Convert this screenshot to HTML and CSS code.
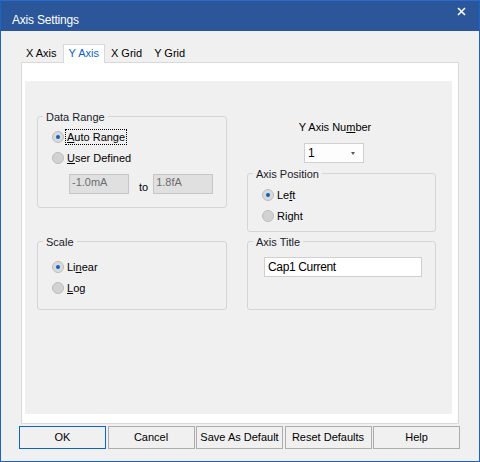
FILE: index.html
```html
<!DOCTYPE html>
<html>
<head>
<meta charset="utf-8">
<title>Axis Settings</title>
<link rel="stylesheet" href="styles.css">
</head>
<body>
<div class="window">
  <div class="titlebar">
    <span class="title">Axis Settings</span>
    <svg class="close" width="9" height="9" viewBox="0 0 9 9"><path d="M1 1 L8 8 M8 1 L1 8" stroke="#fff" stroke-width="1.6" fill="none"/></svg>
  </div>
  <div class="tabs">
    <div class="tab">X Axis</div>
    <div class="tab active">Y Axis</div>
    <div class="tab">X Grid</div>
    <div class="tab">Y Grid</div>
  </div>
  <div class="panel">
    <div class="inner">
      <div class="col col-left">
        <div class="group group-range">
          <span class="legend">Data Range</span>
          <div class="radio-row"><span class="radio checked"></span><span class="label focus"><u>A</u>uto Range</span></div>
          <div class="radio-row"><span class="radio"></span><span class="label"><u>U</u>ser Defined</span></div>
          <div class="range-row">
            <div class="field disabled">-1.0mA</div>
            <span class="to">to</span>
            <div class="field disabled">1.8fA</div>
          </div>
        </div>
        <div class="group group-scale">
          <span class="legend">Scale</span>
          <div class="radio-row"><span class="radio checked"></span><span class="label">Li<u>n</u>ear</span></div>
          <div class="radio-row"><span class="radio"></span><span class="label"><u>L</u>og</span></div>
        </div>
      </div>
      <div class="col col-right">
        <div class="axis-number">
          <div class="axis-label">Y Axis Nu<u>m</u>ber</div>
          <div class="combo"><span class="combo-value">1</span><span class="caret"></span></div>
        </div>
        <div class="group group-position">
          <span class="legend">Axis Position</span>
          <div class="radio-row"><span class="radio checked"></span><span class="label">Le<u>f</u>t</span></div>
          <div class="radio-row"><span class="radio"></span><span class="label">Ri<u>g</u>ht</span></div>
        </div>
        <div class="group group-title">
          <span class="legend">Axis Title</span>
          <div class="field text-field">Cap1 Current</div>
        </div>
      </div>
    </div>
  </div>
  <div class="buttons">
    <div class="btn default">OK</div>
    <div class="btn">Cancel</div>
    <div class="btn">Save As Default</div>
    <div class="btn">Reset Defaults</div>
    <div class="btn">Help</div>
  </div>
</div>
</body>
</html>
```
FILE: styles.css
```css
html, body {
  margin: 0;
  padding: 0;
}
body {
  width: 480px;
  height: 462px;
  background: #f0f0f0;
  font-family: "Liberation Sans", Arial, sans-serif;
  font-size: 11px;
  color: #000;
}
.window {
  box-sizing: border-box;
  width: 480px;
  height: 462px;
  border: 1px solid #1b63c4;
  border-top-color: #2a6bd0;
  display: flex;
  flex-direction: column;
  background: #f0f0f0;
}
.titlebar {
  height: 30px;
  background: #2b579a;
  display: flex;
  justify-content: space-between;
  align-items: flex-start;
  padding: 0 13px 0 11px;
  flex: none;
}
.title {
  color: #fff;
  font-size: 12px;
  line-height: 14px;
  margin-top: 12px;
  letter-spacing: -0.2px;
}
.close {
  margin-top: 6px;
}
.tabs {
  display: flex;
  margin: 13px 0 -1px 19px;
  flex: none;
}
.tab {
  border: 1px solid transparent;
  border-bottom: none;
  line-height: 17px;
  padding: 0 5px 1px;
  color: #000;
}
.tab.active {
  background: #fff;
  border-color: #d9d9d9;
  color: #0a64c8;
  position: relative;
  z-index: 1;
}
.panel {
  box-sizing: border-box;
  height: 362px;
  margin: 0 20px;
  border: 1px solid #d9d9d9;
  background: #fff;
  padding: 18px 6px 9px 3px;
  flex: none;
}
.inner {
  height: 100%;
  background: #f0f0f0;
  display: grid;
  grid-template-columns: 190px 189px;
  column-gap: 20px;
  padding-left: 12px;
  align-items: start;
}
.col {
  display: flex;
  flex-direction: column;
}
.col-left {
  margin-top: 35px;
}
.col-right {
  margin-top: 39px;
}
.group {
  box-sizing: border-box;
  position: relative;
  border: 1px solid #d5d5d5;
  border-radius: 3px;
  padding-left: 14px;
}
.legend {
  position: absolute;
  top: -7px;
  left: 5px;
  padding: 0 3px;
  background: #f0f0f0;
  line-height: 14px;
  color: #1a1a2a;
}
.group-range {
  height: 92px;
  padding-top: 9px;
}
.group-scale {
  height: 69px;
  margin-top: 33px;
  padding-top: 14px;
}
.group-position {
  height: 59px;
  margin-top: 10px;
  padding-top: 10px;
}
.group-title {
  height: 69px;
  margin-top: 9px;
  padding: 15px 0 0 16px;
}
.radio-row {
  height: 21px;
  display: flex;
  align-items: center;
}
.radio {
  box-sizing: border-box;
  width: 12px;
  height: 12px;
  border-radius: 50%;
  border: 1px solid #bdbdbd;
  background: #d2d2d2;
  display: flex;
  align-items: center;
  justify-content: center;
  flex: none;
}
.radio.checked {
  background: #dadada;
}
.radio.checked::after {
  content: "";
  width: 4px;
  height: 4px;
  border-radius: 50%;
  background: #0563c8;
}
.label {
  margin-left: 1px;
  padding: 0 1px;
  border: 1px solid transparent;
  line-height: 14px;
}
.label.focus {
  border: 1px dotted #000;
}
.range-row {
  display: flex;
  margin: 6px 0 0 17px;
}
.field {
  box-sizing: border-box;
  height: 20px;
  border: 1px solid #cfcfcf;
  background: #fff;
}
.field.disabled {
  width: 60px;
  background: #e0e0e0;
  border-color: #c6c6c6;
  color: #6d6d6d;
  line-height: 14px;
  padding-left: 2px;
}
.to {
  align-self: flex-end;
  line-height: 14px;
  margin: 0 5px 0 10px;
}
.axis-number {
  width: 176px;
  display: flex;
  flex-direction: column;
}
.axis-label {
  line-height: 14px;
  text-align: center;
}
.combo {
  box-sizing: border-box;
  width: 60px;
  height: 20px;
  margin: 9px 0 0 57px;
  border: 1px solid #d0d0d0;
  background: #fdfdfd;
  display: flex;
  align-items: center;
  justify-content: space-between;
  padding: 0 8px 0 3px;
}
.combo-value {
  font-size: 12px;
  line-height: 18px;
}
.caret {
  width: 0;
  height: 0;
  border-left: 2.5px solid transparent;
  border-right: 2.5px solid transparent;
  border-top: 3px solid #5a5a5a;
}
.text-field {
  width: 158px;
  font-size: 12px;
  line-height: 18px;
  padding-left: 3px;
  letter-spacing: -0.35px;
}
.buttons {
  display: flex;
  gap: 1.5px;
  margin: 2px 0 0 18px;
  flex: none;
}
.btn {
  box-sizing: border-box;
  width: 87px;
  height: 23px;
  border: 1px solid #adadad;
  background: #f0f0f0;
  text-align: center;
  line-height: 21px;
}
.btn.default {
  border-color: #0a64cc;
}
```
